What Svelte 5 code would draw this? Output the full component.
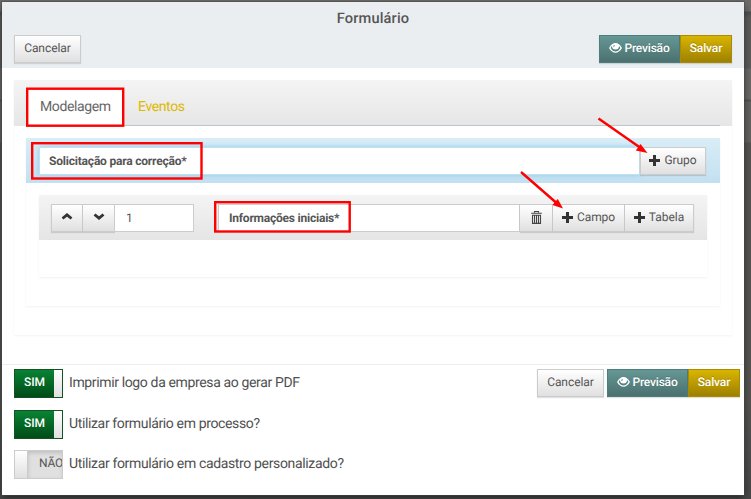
<script>
  const options = [
    { on: true, label: 'Imprimir logo da empresa ao gerar PDF', w: 231 },
    { on: true, label: 'Utilizar formulário em processo?', w: 191 },
    { on: false, label: 'Utilizar formulário em cadastro personalizado?', w: 275 }
  ];
</script>

{#snippet plus()}
  <svg class="plus" width="11" height="11" viewBox="0 0 11 11"><path d="M4 0h3v4h4v3H7v4H4V7H0V4h4z" fill="#333" /></svg>
{/snippet}

{#snippet actions()}
  <div class="actions">
    <button class="btn teal">
      <svg width="13" height="10" viewBox="0 0 13 10">
        <path fill="#fff" fill-rule="evenodd" d="M0 5C2 1.7 4 0 6.5 0S11 1.7 13 5C11 8.3 9 9.7 6.5 9.7S2 8.3 0 5zM1.6 5C3 7.4 4.6 8.5 6.5 8.5S10 7.4 11.400 5C10.900 4.100 10.500 3.600 10 3.100A3.500 3.500 0 0 1 3 3.100C2.500 3.600 2.100 4.100 1.600 5zM4.700 2.300C4.100 3 4.300 3.900 5 4.300L5.900 2.300z" />
      </svg>
      <span>Previsão</span>
    </button>
    <button class="btn gold">Salvar</button>
  </div>
{/snippet}

<div class="backdrop">
  <main class="modal">
    <header>
      <h1>Formulário</h1>
      <div class="bar">
        <button class="btn cancel">Cancelar</button>
        {@render actions()}
      </div>
    </header>

    <section class="panel">
      <nav>
        <a class="tab active" href="#modelagem">Modelagem</a>
        <a class="tab" href="#eventos">Eventos</a>
      </nav>
      <div class="group">
        <div class="group-head">
          <div class="field title">Solicitação para correção*</div>
          <button class="btn grupo">{@render plus()}<span>Grupo</span></button>
        </div>
        <div class="block">
          <div class="block-head">
            <button class="btn sq" aria-label="Subir">
              <svg width="12" height="7" viewBox="0 0 12 7"><path d="M1.500 5.500L6 1.800l4.500 3.700" fill="none" stroke="#333" stroke-width="2.800" /></svg>
            </button>
            <button class="btn sq" aria-label="Descer">
              <svg width="12" height="7" viewBox="0 0 12 7"><path d="M1.500 1.500L6 5.200l4.500-3.700" fill="none" stroke="#333" stroke-width="2.800" /></svg>
            </button>
            <div class="field num">1</div>
            <div class="field info">Informações iniciais*</div>
            <button class="btn trash" aria-label="Excluir">
              <svg width="11" height="13" viewBox="0 0 11 13"><path d="M3.500 1.500V.5h4v1M.2 2.200h10.600M1.500 4.200h8v8.200h-8zM3.500 4v8M5.500 4v8M7.500 4v8" fill="none" stroke="#444" stroke-width="1.100" /></svg>
            </button>
            <button class="btn campo">{@render plus()}<span>Campo</span></button>
            <button class="btn tabela">{@render plus()}<span>Tabela</span></button>
          </div>
        </div>
      </div>
    </section>

    <footer>
      <div class="options">
        {#each options as option}
          <div class="option">
            <div class="switch" class:on={option.on}>
              {#if option.on}<b>SIM</b><i></i>{:else}<i></i><em>NÃO</em>{/if}
            </div>
            <svg class="label" height="20" width={option.w}><text x="0" y="14" textLength={option.w}>{option.label}</text></svg>
          </div>
        {/each}
      </div>
      <div class="foot-buttons">
        <button class="btn cancel">Cancelar</button>
        {@render actions()}
      </div>
    </footer>
  </main>

  <svg class="marks" width="751" height="499" viewBox="0 0 751 499">
    <g fill="none" stroke="#f00" stroke-width="2.400">
      <rect x="27.200" y="88.700" width="96" height="37" />
      <rect x="32.200" y="143.200" width="169.300" height="35.300" />
      <rect x="215.200" y="202.200" width="134.500" height="29.300" />
      <path d="M598.500 118.500L640 147.500M521 172L556 202.500" />
    </g>
    <path d="M647.500 153L640.500 144L635.800 150.500zM563 208.500L557.800 199L552.400 205z" fill="#f00" />
  </svg>
</div>

<style>
  :global(body) { margin: 0; }
  .backdrop {
    box-sizing: border-box; position: relative; width: 751px; height: 499px; padding: 2px 7px 4px 2px; overflow: hidden;
    background: linear-gradient(#6e6c6b 0 11px, #4f4e4e 12px, #5d5c5b 18px 68px, #6b6967 69px 99px, #4f5356 100px 101px, #646260 102px 142px, #555453 143px 400px, #484848);
    font-family: Roboto, sans-serif; color: #555; text-rendering: geometricPrecision;
  }
  .modal { display: flex; flex-direction: column; width: 742px; height: 493px; background: #fff; box-shadow: 0 0 0 1px rgba(70,70,70,.45), 0 3px 8px rgba(0,0,0,.5); }
  header { box-sizing: border-box; height: 66px; padding: 6px 12px 0; background: #ebeef1; }
  h1 { margin: 0; height: 27px; text-align: center; font-size: 14.600px; line-height: 20px; font-weight: 500; letter-spacing: .15px; color: #555; }
  .bar { display: flex; justify-content: space-between; }
  .actions { display: flex; }
  .btn {
    box-sizing: border-box; display: flex; align-items: center; justify-content: center; height: 28px; margin: 0; padding: 0 0 2px;
    flex-shrink: 0; border: 1px solid #ccc; border-radius: 0; background: linear-gradient(#fff, #e0e0e0);
    box-shadow: 0 1px 1px rgba(0,0,0,.12); color: #555; font: 12px/18px Roboto, sans-serif; text-rendering: geometricPrecision; letter-spacing: -.05px; white-space: nowrap;
  }
  .cancel { width: 67px; }
  .teal { width: 81px; gap: 2px; color: #fff; border-color: #4d7d7d; background: linear-gradient(#659795, #4b706f); font-weight: 500; letter-spacing: -.2px; text-shadow: 0 -1px 0 rgba(0,0,0,.2); }
  .gold { width: 52px; color: #fff; border-color: #a88c08; background: linear-gradient(#d9b500, #9e8000); font-weight: 500; letter-spacing: -.15px; text-shadow: 0 -1px 0 rgba(0,0,0,.2); }
  .panel { box-sizing: border-box; width: 718px; height: 255px; margin: 12px 12px 0; box-shadow: 0 1px 2px rgba(0,0,0,.05); }
  nav { box-sizing: border-box; display: flex; height: 46px; padding: 8px 12px 0; background: linear-gradient(#f4f4f4, #e6e6e6); }
  .tab { box-sizing: border-box; height: 38px; padding: 9px 14px 0 14px; border-bottom: 1px solid #b9c7d1; font-size: 14px; line-height: 20px; letter-spacing: -.38px; color: #dfb900; text-decoration: none; }
  .tab:last-child { flex: 1; }
  .active { width: 98px; background: #fff; color: #666; border: 0; padding-right: 0; }
  .group { width: 694px; height: 168px; margin: 12px 12px 0; box-shadow: 0 1px 2px rgba(0,0,0,.05); }
  .group-head { box-sizing: border-box; display: flex; height: 45px; padding: 9px 13px 0; background: linear-gradient(#d9edf7, #c3e0f0); }
  .field { box-sizing: border-box; height: 28px; padding: 0 9px; border: 1px solid #ccc; background: #fff; font-size: 12px; line-height: 26px; white-space: nowrap; }
  .title { width: 601px; border-color: #c3e0ef; box-shadow: 0 0 5px #8dcaf1; font-weight: 700; letter-spacing: -.2px; }
  .btn :global(.plus) { margin-right: 4px; }
  .grupo { width: 66px; }
  .block { width: 668px; height: 82px; margin: 12px 13px 0; box-shadow: 0 1px 2px rgba(0,0,0,.06); }
  .block-head { box-sizing: border-box; display: flex; height: 45px; padding: 9px 12px 0; background: linear-gradient(#f4f4f4, #e5e5e5); }
  .sq { width: 32px; }
  .sq + .sq { border-left: 0; }
  .sq svg { margin-bottom: 1px; }
  .num { width: 79px; border-left: 0; padding-left: 11px; }
  .info { width: 302px; margin-left: 24px; padding-left: 10px; font-weight: 700; letter-spacing: -.22px; }
  .trash { width: 33px; border-left: 0; }
  .campo { width: 72px; border-left: 0; }
  .tabela { width: 69px; border-left: 0; }
  footer { box-sizing: border-box; display: flex; justify-content: space-between; height: 131px; margin-top: 29px; padding: 4px 4px 0 12px; border-top: 1px solid #eee; }
  .options { display: flex; flex-direction: column; gap: 12px; }
  .option { display: flex; gap: 6px; align-items: flex-start; height: 28.500px; }
  .label { margin-top: 4px; overflow: visible; font-size: 14px; fill: #505050; }
  .switch { box-sizing: border-box; display: flex; width: 49px; height: 29px; border: 1px solid #ccc; background: #e0e0e0; overflow: hidden; font-size: 12px; line-height: 25px; }
  .switch.on { border-color: #145324; background: linear-gradient(#088333, #004c18); color: #fff; }
  .switch b { width: 39px; flex-shrink: 0; text-align: center; font-weight: 500; font-size: 12px; }
  .switch i { box-sizing: border-box; width: 13px; flex-shrink: 0; border-right: 1px solid #ccc; background: linear-gradient(#fff, #e0e0e0); }
  .switch.on i { width: 8px; border: 0; }
  .switch em { flex: 1; padding-left: 11px; font-style: normal; letter-spacing: -.2px; box-shadow: inset 0 2px 4px rgba(0,0,0,.15); }
  .foot-buttons { display: flex; gap: 3px; }
  .foot-buttons .actions { flex-shrink: 0; }
  .marks { position: absolute; top: 0; left: 0; pointer-events: none; }
</style>
